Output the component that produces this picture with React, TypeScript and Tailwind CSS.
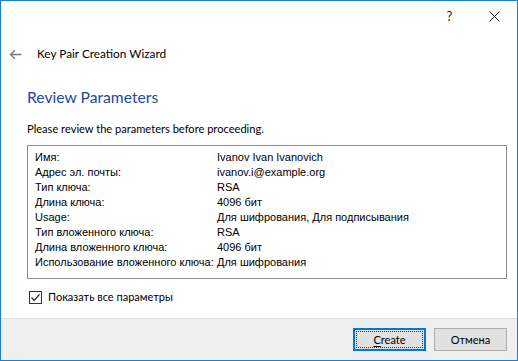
import React from "react";

const rows: [string, string][] = [
  ["Имя:", "Ivanov Ivan Ivanovich"],
  ["Адрес эл. почты:", "ivanov.i@example.org"],
  ["Тип ключа:", "RSA"],
  ["Длина ключа:", "4096 бит"],
  ["Usage:", "Для шифрования, Для подписывания"],
  ["Тип вложенного ключа:", "RSA"],
  ["Длина вложенного ключа:", "4096 бит"],
  ["Использование вложенного ключа:", "Для шифрования"],
];

export default function App() {
  return (
    <div
      className="w-[518px] h-[361px] border border-[#1a7fd4] bg-white flex flex-col text-[#000] overflow-hidden"
      style={{ fontFamily: 'Lato, "Noto Sans", sans-serif' }}
    >
      {/* title bar */}
      <div className="h-[30px] flex justify-end items-center shrink-0">
        <div className="w-[46px] h-[30px] flex items-center justify-center pl-[3px] text-[13px] leading-none text-[#222]">?</div>
        <div className="w-[46px] h-[30px] flex items-center justify-center">
          <svg width="11" height="11" viewBox="0 0 11 11">
            <path d="M0.5 0.5 L10.5 10.5 M10.5 0.5 L0.5 10.5" stroke="#111" strokeWidth="1" />
          </svg>
        </div>
      </div>
      {/* content */}
      <div className="flex-1 flex flex-col">
        <div className="h-[46px] flex items-center shrink-0">
          <div className="w-[36px] flex items-center justify-start pl-[8px]">
            <svg width="13" height="11" viewBox="0 0 13 11">
              <path d="M12.5 5.5 H1.5 M5.8 1.2 L1.5 5.5 L5.8 9.8" stroke="#7a7a7a" strokeWidth="1.3" fill="none" />
            </svg>
          </div>
          <span className="text-[11.8px] leading-[16px]">Key Pair Creation Wizard</span>
        </div>
        <div className="pl-[26px] pr-[10px] flex flex-col">
          <div className="pt-[10px] text-[15.7px] leading-[20px] text-[#23479b]">Review Parameters</div>
          <div className="mt-[14px] text-[11.1px] leading-[16px]">Please review the parameters before proceeding.</div>
          <div
            className="mt-[8px] border border-[#8c8c8c] pt-[4px] pb-[8px] pl-[7px]"
            style={{ fontFamily: '"Liberation Sans", Arial, sans-serif' }}
          >
            {rows.map(([k, v]) => (
              <div key={k} className="flex h-[15px] items-center text-[11px] leading-[15px]">
                <span className="w-[182px] shrink-0 whitespace-nowrap">{k}</span>
                <span className="whitespace-nowrap">{v}</span>
              </div>
            ))}
          </div>
          <div className="mt-[10px] flex items-center">
            <div className="w-[13px] h-[13px] border border-[#333] bg-white flex items-center justify-center ml-[2px]">
              <svg width="11" height="11" viewBox="0 0 11 11">
                <path d="M1.5 5.5 L4.2 8.3 L9.6 2.4" stroke="#222" strokeWidth="1.2" fill="none" />
              </svg>
            </div>
            <span className="ml-[6px] text-[11px] leading-[16px]">Показать все параметры</span>
          </div>
        </div>
      </div>
      {/* footer */}
      <div className="h-[42px] shrink-0 border-t border-[#dfdfdf] bg-[#f0f0f0] flex items-center justify-end pr-[10px] gap-[8px]">
        <button className="w-[73px] h-[23px] border-2 border-[#0078d7] bg-[#e1e1e1] flex items-center justify-center p-0">
          <span className="w-[67px] h-[17px] border border-dotted border-[#333] flex items-center justify-center text-[11px] leading-none">
            <span className="underline underline-offset-2">C</span>reate
          </span>
        </button>
        <button className="w-[73px] h-[23px] border border-[#adadad] bg-[#e1e1e1] flex items-center justify-center text-[11px] leading-none p-0">
          Отмена
        </button>
      </div>
    </div>
  );
}
